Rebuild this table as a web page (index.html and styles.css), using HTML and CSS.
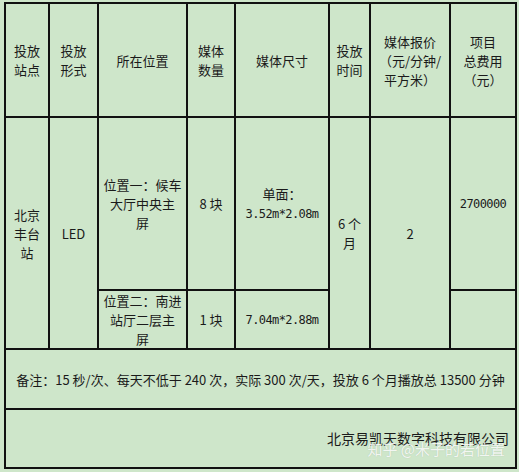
FILE: index.html
```html
<!DOCTYPE html>
<html lang="zh-CN">
<head>
<meta charset="utf-8">
<title>北京丰台站 LED 媒体报价</title>
<link rel="stylesheet" href="styles.css">
</head>
<body>
<table class="sheet">
  <colgroup>
    <col class="c1"><col class="c2"><col class="c3"><col class="c4">
    <col class="c5"><col class="c6"><col class="c7"><col class="c8">
  </colgroup>
  <tr class="head">
    <td>投放<br>站点</td>
    <td>投放<br>形式</td>
    <td>所在位置</td>
    <td>媒体<br>数量</td>
    <td>媒体尺寸</td>
    <td>投放<br>时间</td>
    <td>媒体报价<br>（元/分钟/<br>平方米）</td>
    <td>项目<br>总费用<br>（元）</td>
  </tr>
  <tr class="r1">
    <td rowspan="2">北京<br>丰台<br>站</td>
    <td rowspan="2">LED</td>
    <td>位置一：候车<br>大厅中央主<br>屏</td>
    <td>8 块</td>
    <td>单面：<br><span class="mono">3.52m*2.08m</span></td>
    <td rowspan="2">6 个<br>月</td>
    <td rowspan="2">2</td>
    <td><span class="mono">2700000</span></td>
  </tr>
  <tr class="r2">
    <td>位置二：南进<br>站厅二层主<br>屏</td>
    <td>1 块</td>
    <td><span class="mono">7.04m*2.88m</span></td>
    <td></td>
  </tr>
  <tr class="notes">
    <td colspan="8">备注：15 秒/次、每天不低于 240 次，实际 300 次/天，投放 6 个月播放总 13500 分钟</td>
  </tr>
  <tr class="company">
    <td colspan="8"><span class="name">北京易凯天数字科技有限公司</span><span class="mark">知乎 @米子的若位置</span></td>
  </tr>
</table>
</body>
</html>
```

FILE: styles.css
```css
body {
  margin: 0;
  background: #cee6ca;
  font-family: "Noto Sans CJK SC", "Noto Sans", sans-serif;
  font-size: 13px;
  color: #1a1a1a;
}

.sheet {
  border-collapse: collapse;
  table-layout: fixed;
  width: 511px;
  margin: 2px 0 0 4px;
}

.c1 { width: 44px; }
.c2 { width: 49px; }
.c3 { width: 89px; }
.c4 { width: 48px; }
.c5 { width: 94px; }
.c6 { width: 41px; }
.c7 { width: 80px; }
.c8 { width: 66px; }

.sheet td {
  border: 2px solid #111;
  padding: 0;
  text-align: center;
  vertical-align: middle;
  line-height: 19px;
  font-weight: normal;
}

.head td { height: 112px; }
.r1 td { height: 171px; }
.r2 td { height: 57px; }
.notes td { height: 58px; }
.company td { height: 57px; }

.mono {
  font-family: "DejaVu Sans Mono", "Liberation Mono", monospace;
  font-size: 12px;
  letter-spacing: -0.6px;
}

.notes td {
  font-size: 13px;
}

.company td {
  position: relative;
  text-align: right;
  padding-right: 6px;
}

.company .name {
  font-size: 14px;
}

.company .mark {
  position: absolute;
  right: 10px;
  top: 30px;
  font-size: 15px;
  line-height: 18px;
  color: rgba(255, 255, 255, 0.85);
  text-shadow: 0 0 1px rgba(120, 140, 120, 0.4);
}
```
